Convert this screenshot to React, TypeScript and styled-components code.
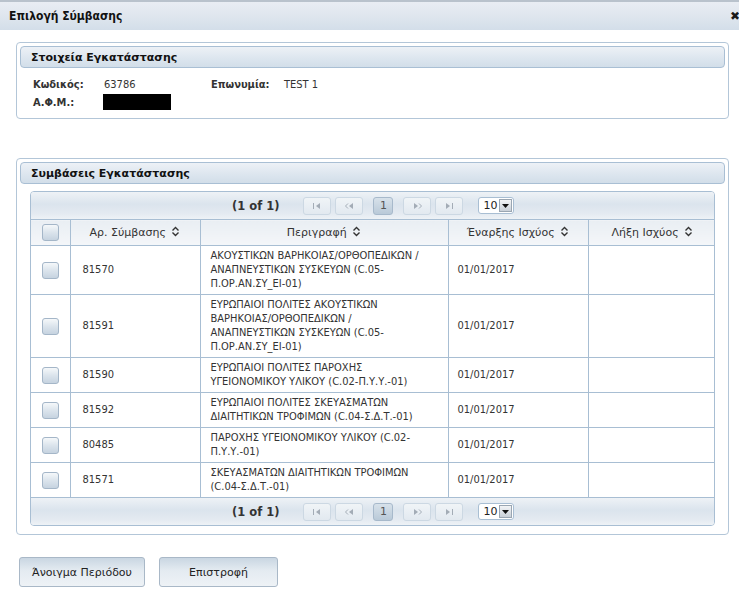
import React from 'react'
import styled, { createGlobalStyle } from 'styled-components'

const GlobalStyle = createGlobalStyle`
  html, body {
    margin: 0;
    padding: 0;
    background: #ffffff;
  }
  body {
    font-family: 'DejaVu Sans', Verdana, sans-serif;
    font-size: 11px;
    color: #222;
  }
`

const VERDANA = `'DejaVu Sans', Verdana, sans-serif`
const TAHOMA = `'DejaVu Sans Condensed', 'DejaVu Sans', Tahoma, sans-serif`

interface Contract {
  id: string
  desc: string[]
  start: string
  end: string
}

const contracts: Contract[] = [
  {
    id: '81570',
    desc: ['ΑΚΟΥΣΤΙΚΩΝ ΒΑΡΗΚΟΙΑΣ/ΟΡΘΟΠΕΔΙΚΩΝ /', 'ΑΝΑΠΝΕΥΣΤΙΚΩΝ ΣΥΣΚΕΥΩΝ (C.05-', 'Π.ΟΡ.ΑΝ.ΣΥ_ΕΙ-01)'],
    start: '01/01/2017',
    end: '',
  },
  {
    id: '81591',
    desc: [
      'ΕΥΡΩΠΑΙΟΙ ΠΟΛΙΤΕΣ ΑΚΟΥΣΤΙΚΩΝ',
      'ΒΑΡΗΚΟΙΑΣ/ΟΡΘΟΠΕΔΙΚΩΝ /',
      'ΑΝΑΠΝΕΥΣΤΙΚΩΝ ΣΥΣΚΕΥΩΝ (C.05-',
      'Π.ΟΡ.ΑΝ.ΣΥ_ΕΙ-01)',
    ],
    start: '01/01/2017',
    end: '',
  },
  {
    id: '81590',
    desc: ['ΕΥΡΩΠΑΙΟΙ ΠΟΛΙΤΕΣ ΠΑΡΟΧΗΣ', 'ΥΓΕΙΟΝΟΜΙΚΟΥ ΥΛΙΚΟΥ (C.02-Π.Υ.Υ.-01)'],
    start: '01/01/2017',
    end: '',
  },
  {
    id: '81592',
    desc: ['ΕΥΡΩΠΑΙΟΙ ΠΟΛΙΤΕΣ ΣΚΕΥΑΣΜΑΤΩΝ', 'ΔΙΑΙΤΗΤΙΚΩΝ ΤΡΟΦΙΜΩΝ (C.04-Σ.Δ.Τ.-01)'],
    start: '01/01/2017',
    end: '',
  },
  {
    id: '80485',
    desc: ['ΠΑΡΟΧΗΣ ΥΓΕΙΟΝΟΜΙΚΟΥ ΥΛΙΚΟΥ (C.02-', 'Π.Υ.Υ.-01)'],
    start: '01/01/2017',
    end: '',
  },
  {
    id: '81571',
    desc: ['ΣΚΕΥΑΣΜΑΤΩΝ ΔΙΑΙΤΗΤΙΚΩΝ ΤΡΟΦΙΜΩΝ', '(C.04-Σ.Δ.Τ.-01)'],
    start: '01/01/2017',
    end: '',
  },
]

function SortIcon() {
  return (
    <SortSvg width="9" height="11" viewBox="0 0 9 11">
      <path d="M1.5 4.5 L4.5 1.5 L7.5 4.5" fill="none" stroke="#333" strokeWidth="1.4" />
      <path d="M1.5 6.5 L4.5 9.5 L7.5 6.5" fill="none" stroke="#333" strokeWidth="1.4" />
    </SortSvg>
  )
}

type NavKind = 'first' | 'prev' | 'next' | 'last'

function NavIcon({ kind }: { kind: NavKind }) {
  const c = '#a3acb6'
  if (kind === 'first')
    return (
      <svg width="8" height="6" viewBox="0 0 8 6">
        <rect x="0" y="0" width="1" height="6" fill={c} />
        <path d="M7 0 L7 6 L3 3 Z" fill={c} />
      </svg>
    )
  if (kind === 'prev')
    return (
      <svg width="9" height="6" viewBox="0 0 9 6">
        <path d="M3 0.5 L0.5 3 L3 5.5" fill="none" stroke={c} strokeWidth="1" />
        <path d="M8 0 L8 6 L4 3 Z" fill={c} />
      </svg>
    )
  if (kind === 'next')
    return (
      <svg width="9" height="6" viewBox="0 0 9 6">
        <path d="M1 0 L1 6 L5 3 Z" fill={c} />
        <path d="M6 0.5 L8.5 3 L6 5.5" fill="none" stroke={c} strokeWidth="1" />
      </svg>
    )
  return (
    <svg width="8" height="6" viewBox="0 0 8 6">
      <path d="M1 0 L1 6 L5 3 Z" fill={c} />
      <rect x="7" y="0" width="1" height="6" fill={c} />
    </svg>
  )
}

function Paginator() {
  return (
    <PagerBar>
      <PagerInfo>(1 of 1)</PagerInfo>
      <PagerGroup>
        <NavButton>
          <NavIcon kind="first" />
        </NavButton>
        <NavButton>
          <NavIcon kind="prev" />
        </NavButton>
      </PagerGroup>
      <PageButton>1</PageButton>
      <PagerGroup>
        <NavButton>
          <NavIcon kind="next" />
        </NavButton>
        <NavButton>
          <NavIcon kind="last" />
        </NavButton>
      </PagerGroup>
      <RowsSelect>
        <span>10</span>
        <SelectArrow>
          <svg width="7" height="4" viewBox="0 0 7 4">
            <path d="M0 0 L7 0 L3.5 4 Z" fill="#111" />
          </svg>
        </SelectArrow>
      </RowsSelect>
    </PagerBar>
  )
}

export default function App() {
  return (
    <>
      <GlobalStyle />
      <Dialog>
        <TitleBar>
          <Title>Επιλογή Σύμβασης</Title>
          <Close>✖</Close>
        </TitleBar>

        <Fieldset>
          <Legend>Στοιχεία Εγκατάστασης</Legend>
          <InfoGrid>
            <Label>Κωδικός:</Label>
            <Value>63786</Value>
            <Label>Επωνυμία:</Label>
            <Value>TEST 1</Value>
            <Label>Α.Φ.Μ.:</Label>
            <Redacted />
          </InfoGrid>
        </Fieldset>

        <Fieldset $spaced>
          <Legend>Συμβάσεις Εγκατάστασης</Legend>
          <DataPanel>
            <Paginator />
            <Table>
              <colgroup>
                <col style={{ width: 39 }} />
                <col style={{ width: 130 }} />
                <col style={{ width: 248 }} />
                <col style={{ width: 140 }} />
                <col style={{ width: 128 }} />
              </colgroup>
              <thead>
                <tr>
                  <Th>
                    <Checkbox />
                  </Th>
                  <Th>
                    Αρ. Σύμβασης <SortIcon />
                  </Th>
                  <Th>
                    Περιγραφή <SortIcon />
                  </Th>
                  <Th>
                    Έναρξης Ισχύος <SortIcon />
                  </Th>
                  <Th>
                    Λήξη Ισχύος <SortIcon />
                  </Th>
                </tr>
              </thead>
              <tbody>
                {contracts.map((c) => (
                  <tr key={c.id}>
                    <Td $center>
                      <Checkbox />
                    </Td>
                    <Td $pad={12}>{c.id}</Td>
                    <Td $pad={10}>
                      {c.desc.map((line, i) => (
                        <DescLine key={i}>{line}</DescLine>
                      ))}
                    </Td>
                    <Td $pad={9}>{c.start}</Td>
                    <Td $pad={9}>{c.end}</Td>
                  </tr>
                ))}
              </tbody>
            </Table>
            <Paginator />
          </DataPanel>
        </Fieldset>

        <Actions>
          <ActionButton $width={126}>Άνοιγμα Περιόδου</ActionButton>
          <ActionButton $width={119}>Επιστροφή</ActionButton>
        </Actions>
      </Dialog>
    </>
  )
}

const Dialog = styled.div`
  width: 739px;
  height: 593px;
  background: #fff;
  overflow: hidden;
`

const TitleBar = styled.div`
  height: 30px;
  box-sizing: border-box;
  border-top: 2px solid #b9c2cc;
  background: linear-gradient(#e9edf3, #dfe6ee 50%, #d3dee9);
  display: flex;
  align-items: center;
  justify-content: space-between;
  padding: 0 0 0 9px;
`

const Title = styled.span`
  font-family: ${TAHOMA};
  font-weight: bold;
  font-size: 12px;
  color: #111;
`

const Close = styled.span`
  font-size: 12px;
  font-weight: bold;
  color: #1a1a1a;
  margin-right: -1px;
`

const Fieldset = styled.div<{ $spaced?: boolean }>`
  margin: ${(p) => (p.$spaced ? '39px' : '12px')} 10px 0 16px;
  border: 1px solid #b3c6d8;
  border-radius: 4px;
  padding: 3px 3px 8px;
`

const Legend = styled.div`
  height: 22px;
  box-sizing: border-box;
  border: 1px solid #a9bfd4;
  border-radius: 4px;
  background: linear-gradient(#edf1f6, #dde6ef 55%, #d2dee9);
  display: flex;
  align-items: center;
  padding: 0 10px;
  font-family: ${VERDANA};
  font-weight: bold;
  font-size: 11px;
  color: #111;
`

const InfoGrid = styled.div`
  display: grid;
  grid-template-columns: 71px 107px 73px auto;
  row-gap: 2px;
  align-items: center;
  padding: 9px 0 0 13px;
  font-family: ${TAHOMA};
  font-size: 11px;
  line-height: 15px;
`

const Label = styled.span`
  font-weight: bold;
  color: #333;
`

const Value = styled.span`
  color: #333;
`

const Redacted = styled.span`
  display: block;
  width: 68px;
  height: 16px;
  margin-left: -1px;
  background: #000;
`

const DataPanel = styled.div`
  margin: 7px 10px 0 10px;
  border: 1px solid #a8bed3;
  border-radius: 4px;
  overflow: hidden;
`

const PagerBar = styled.div`
  height: 27px;
  box-sizing: border-box;
  background: linear-gradient(#eef2f6, #dbe4ed 45%, #e4eaf1 80%, #eef2f6);
  display: flex;
  align-items: center;
  padding-left: 201px;
  gap: 10px;
`

const PagerInfo = styled.span`
  font-family: ${VERDANA};
  font-weight: bold;
  font-size: 11.5px;
  color: #333;
  margin-right: 14px;
`

const PagerGroup = styled.div`
  display: flex;
  gap: 4px;
`

const NavButton = styled.div`
  width: 28px;
  height: 18px;
  box-sizing: border-box;
  border: 1px solid #ccd8e3;
  border-radius: 3px;
  background: linear-gradient(#f0f4f7, #e2e9f0);
  display: flex;
  align-items: center;
  justify-content: center;
`

const PageButton = styled.div`
  width: 20px;
  height: 18px;
  box-sizing: border-box;
  border: 1px solid #a7b9cb;
  border-radius: 3px;
  background: linear-gradient(#d7e1ea, #b9c9d8);
  display: flex;
  align-items: center;
  justify-content: center;
  font-family: ${VERDANA};
  font-size: 11px;
  color: #555;
`

const RowsSelect = styled.div`
  margin-left: 5px;
  width: 36px;
  height: 17px;
  box-sizing: border-box;
  border: 1px solid #a8bed3;
  border-radius: 3px;
  background: #fff;
  display: flex;
  align-items: center;
  justify-content: space-between;
  padding: 0 1px 0 4px;
  font-family: ${VERDANA};
  font-size: 11px;
  color: #222;
`

const SelectArrow = styled.span`
  width: 13px;
  height: 13px;
  box-sizing: border-box;
  border: 1px solid #9aa6b2;
  background: linear-gradient(#f2f4f6, #c9d0d8);
  display: flex;
  align-items: center;
  justify-content: center;
`

const Table = styled.table`
  width: 100%;
  table-layout: fixed;
  border-collapse: collapse;
  font-family: ${TAHOMA};
  font-size: 11px;
  color: #333;
`

const Th = styled.th`
  height: 26px;
  box-sizing: border-box;
  border: 1px solid #a8bed3;
  border-left-color: #b9cad9;
  background: linear-gradient(#e9eef3, #f4f6f9);
  font-family: ${VERDANA};
  font-weight: normal;
  font-size: 11px;
  color: #333;
  text-align: center;
  padding: 0;
  &:first-child {
    border-left: none;
  }
  &:last-child {
    border-right: none;
  }
`

const SortSvg = styled.svg`
  vertical-align: -1px;
  margin-left: 2px;
`

const Td = styled.td<{ $pad?: number; $center?: boolean }>`
  border: 1px solid #a8bed3;
  background: #fff;
  padding: 3px ${(p) => p.$pad ?? 4}px;
  line-height: 14px;
  text-align: ${(p) => (p.$center ? 'center' : 'left')};
  vertical-align: middle;
  &:first-child {
    border-left: none;
  }
  &:last-child {
    border-right: none;
  }
`

const DescLine = styled.div`
  white-space: nowrap;
`

const Checkbox = styled.span`
  display: inline-block;
  vertical-align: middle;
  width: 17px;
  height: 17px;
  box-sizing: border-box;
  border: 1px solid #a4b6c8;
  border-radius: 3px;
  background: linear-gradient(#f5f8fa, #dbe4ec 50%, #c6d3e0);
`

const Actions = styled.div`
  display: flex;
  gap: 14px;
  margin: 22px 0 0 19px;
`

const ActionButton = styled.button<{ $width: number }>`
  width: ${(p) => p.$width}px;
  height: 30px;
  border: 1px solid #a9b8c7;
  border-radius: 3px;
  background: linear-gradient(#c9d6e2, #e4ebf1 45%, #eef2f6);
  font-family: ${VERDANA};
  font-size: 11px;
  color: #222;
  padding: 0;
`
